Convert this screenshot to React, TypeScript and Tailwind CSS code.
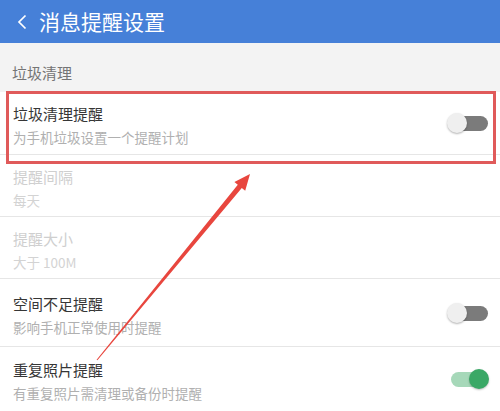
const rows = [
  { title: "垃圾清理提醒", sub: "为手机垃圾设置一个提醒计划", h: "h-[63px]", toggle: "off" },
  { title: "提醒间隔", sub: "每天", h: "h-[62px]", disabled: true },
  { title: "提醒大小", sub: "大于 100M", h: "h-[62px]", disabled: true },
  { title: "空间不足提醒", sub: "影响手机正常使用时提醒", h: "h-[68px]", toggle: "off" },
  { title: "重复照片提醒", sub: "有重复照片需清理或备份时提醒", h: "h-[64px]", toggle: "on" },
];

function Toggle({ on }: { on: boolean }) {
  return (
    <div className="relative h-[20px] w-[42px] shrink-0">
      <div
        className={
          on
            ? "absolute left-[4px] right-[6px] top-[3px] h-[15px] rounded-full bg-[#a6d8b9]"
            : "absolute left-[8px] right-[1px] top-[3px] h-[15px] rounded-full bg-[#7b7b7b]"
        }
      />
      <div
        className={
          on
            ? "absolute right-0 top-0 h-[20px] w-[20px] rounded-full bg-[#3aa866] shadow-[0_1px_2px_rgba(0,0,0,0.25)]"
            : "absolute left-0 top-0 h-[20px] w-[20px] rounded-full bg-[#efefef] shadow-[0_1px_2px_rgba(0,0,0,0.3)]"
        }
      />
    </div>
  );
}

export default function App() {
  return (
    <div
      className="relative h-[411px] w-[500px] overflow-hidden bg-white"
      style={{ fontFamily: '"Noto Sans CJK SC", "Noto Sans", sans-serif' }}
    >
      <header className="flex h-[43px] items-center bg-[#4680d8] pl-[17px] text-white">
        <svg width="12" height="18" viewBox="0 0 12 18" className="mr-[10px]">
          <polyline points="8.5,2.5 2,9 8.5,15.5" fill="none" stroke="white" strokeWidth="1.7" />
        </svg>
        <span className="text-[21px] leading-none">消息提醒设置</span>
      </header>

      <div className="h-[49px] bg-[#f3f3f3] pl-[12px] pt-[20px] text-[15px] leading-[20px] text-[#757575]">
        垃圾清理
      </div>

      {rows.map((r, i) => (
        <div
          key={r.title}
          className={`${r.h} flex items-center justify-between pl-[13px] pr-[11px] ${
            i < rows.length - 1 ? "border-b border-[#e6e6e6]" : ""
          }`}
        >
          <div className="flex flex-col pt-[3px]">
            <span className={`text-[15px] leading-[21px] ${r.disabled ? "text-[#cfcfcf]" : "text-[#363636]"}`}>
              {r.title}
            </span>
            <span className={`mt-[4px] text-[13.5px] leading-[18px] ${r.disabled ? "text-[#d3d3d3]" : "text-[#b0b0b0]"}`}>
              {r.sub}
            </span>
          </div>
          {r.toggle && <Toggle on={r.toggle === "on"} />}
        </div>
      ))}

      {/* annotation */}
      <div className="pointer-events-none absolute left-[6px] top-[91px] h-[73px] w-[490px] border-[3px] border-[#e05a5a]" />
      <svg className="pointer-events-none absolute left-0 top-0" width="500" height="411">
        <polygon
          points="250,174 245.2,190.8 241.8,188.1 97.4,360.3 96.6,359.7 237.8,184.7 234.4,182"
          fill="#e8463e"
        />
      </svg>
    </div>
  );
}
